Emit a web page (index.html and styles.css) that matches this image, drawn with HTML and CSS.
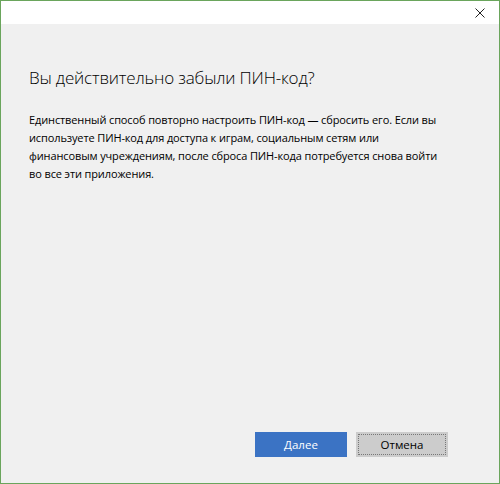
FILE: index.html
```html
<!DOCTYPE html>
<html lang="ru">
<head>
<meta charset="utf-8">
<link rel="stylesheet" href="styles.css">
</head>
<body>
<div class="window">
  <div class="titlebar">
    <button class="close" aria-label="Закрыть">
      <svg width="10" height="10" viewBox="0 0 10 10"><path d="M0.5 0.5L9.5 9.5M9.5 0.5L0.5 9.5" stroke="#222" stroke-width="1" fill="none"/></svg>
    </button>
  </div>
  <div class="content">
    <h1 class="title">Вы действительно забыли ПИН-код?</h1>
    <p class="text">Единственный способ повторно настроить ПИН-код — сбросить его. Если вы используете ПИН-код для доступа к играм, социальным сетям или финансовым учреждениям, после сброса ПИН-кода потребуется снова войти во все эти приложения.</p>
    <div class="actions">
      <button class="btn primary">Далее</button>
      <button class="btn secondary">Отмена</button>
    </div>
  </div>
</div>
</body>
</html>
```
FILE: styles.css
```css
html, body {
  margin: 0;
  padding: 0;
}
body {
  width: 500px;
  height: 484px;
  font-family: "Open Sans", "Noto Sans", sans-serif;
  background: #f0f0f0;
}
.window {
  box-sizing: border-box;
  width: 500px;
  height: 484px;
  border: 1px solid #6aa55c;
  display: flex;
  flex-direction: column;
  background: #f0f0f0;
}
.titlebar {
  height: 23px;
  background: #ffffff;
  display: flex;
  justify-content: flex-end;
  align-items: center;
  flex: none;
}
.close {
  border: 0;
  background: transparent;
  width: 34px;
  height: 23px;
  padding: 0;
  margin-right: 2px;
  display: flex;
  align-items: center;
  justify-content: center;
}
.content {
  flex: 1;
  display: flex;
  flex-direction: column;
  padding: 41px 28px 26px 28px;
}
.title {
  margin: 0;
  font-weight: 300;
  font-size: 17px;
  letter-spacing: -0.18px;
  line-height: 26px;
  color: #000;
}
.text {
  margin: 20px 0 0;
  font-size: 11px;
  letter-spacing: -0.12px;
  line-height: 18px;
  color: #000;
  width: 414px;
}
.actions {
  margin-top: auto;
  display: flex;
  justify-content: flex-end;
  gap: 9px;
  padding-right: 23px;
}
.btn {
  box-sizing: border-box;
  width: 92px;
  height: 25px;
  font-family: "Open Sans", "Noto Sans", sans-serif;
  font-size: 11.5px;
  padding: 0;
}
.primary {
  background: #3b73c4;
  color: #fff;
  border: 2px solid #3b73c4;
}
.secondary {
  background: #cccccc;
  color: #000;
  border: 2px solid #cccccc;
  outline: 1px dotted #777;
  outline-offset: -3px;
}
```
